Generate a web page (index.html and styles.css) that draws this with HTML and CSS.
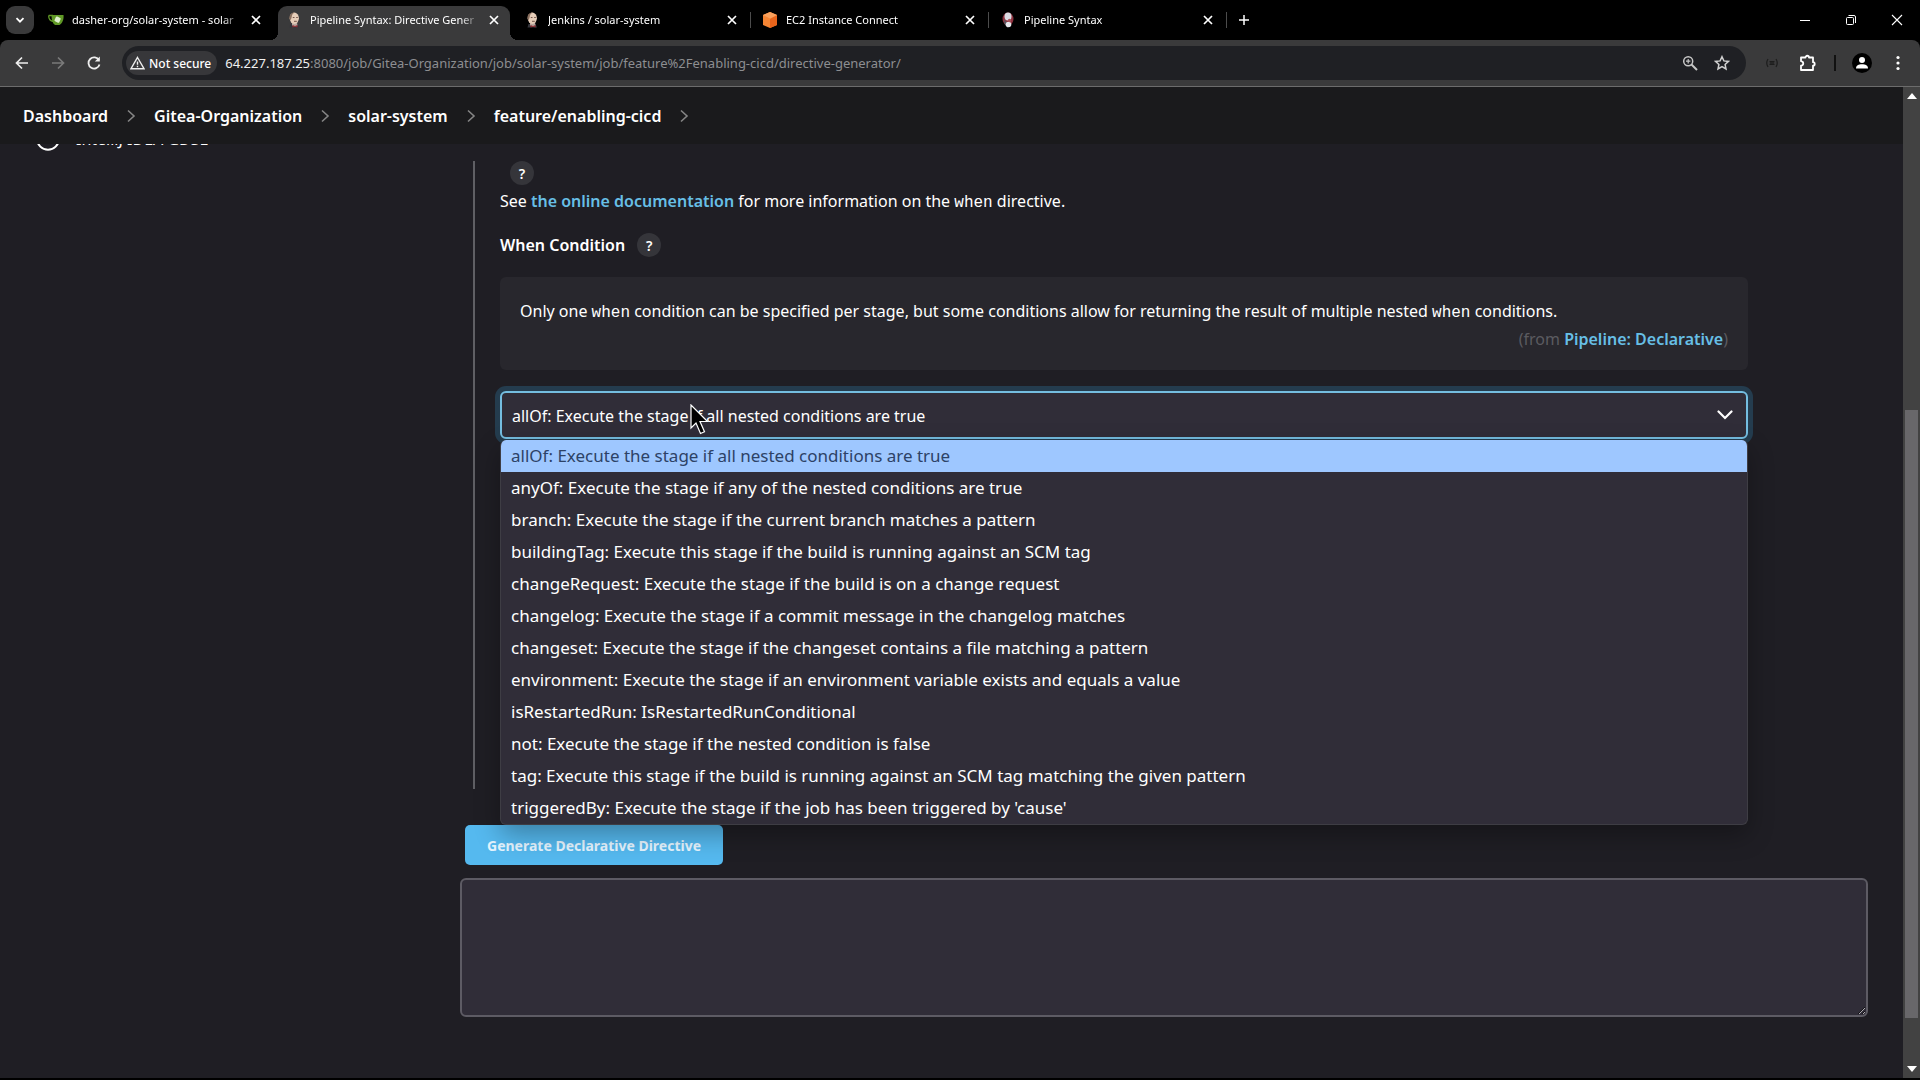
FILE: index.html
```html
<!DOCTYPE html>
<html lang="en">
<head>
<meta charset="utf-8">
<title>Pipeline Syntax: Directive Generator</title>
<link rel="stylesheet" href="styles.css">
</head>
<body>
<svg class="sprite" aria-hidden="true">
  <symbol id="close" viewBox="0 0 12 12"><path d="M2 2l8 8M10 2l-8 8" stroke="currentColor" stroke-width="1.7" fill="none"/></symbol>
  <symbol id="butler" viewBox="0 0 16 16"><path d="M3.500 15.500l1-3.500h7l1.500 3.500z" fill="#35353b"/><path d="M6 10.500h5l.5 3-2.500 1.500-3-1.500z" fill="#b9a8a0"/><path d="M6.500 13l2.500 1 2.500-1v2.500l-2.500-.8-2.500.8z" fill="#8e2f35"/><ellipse cx="8.300" cy="6.300" rx="4.600" ry="5.700" fill="#e6cdb8"/><path d="M3.600 7C2.800 2.500 6 .3 9 .6 6.500 1.500 6 3 5.700 5L4.800 8z" fill="#8a6f5e"/><path d="M6.800 5.500h1.700M10.200 5.500h1.600M8 9.300h2.800" stroke="#66473d" stroke-width=".9"/></symbol>
  <symbol id="crumb" viewBox="0 0 12 14"><path d="M3 1.500L9 7l-6 5.500" stroke="currentColor" stroke-width="1.600" fill="none"/></symbol>
</svg>

<header class="browser">
  <div class="tab-strip">
    <button class="tab-search" type="button" aria-label="Search tabs"><svg width="12" height="12" viewBox="0 0 12 12"><path d="M2.500 4.200L6 7.700l3.500-3.500" stroke="#fff" stroke-width="1.800" fill="none"/></svg></button>
    <nav class="tabs" aria-label="Tabs">
      <div class="tab">
        <svg class="favicon" viewBox="0 0 16 16"><path d="M.7 3.500C.5 8 2.500 9 5.500 9.500M.7 3.500H5" fill="none" stroke="#609926" stroke-width="1.300"/><path d="M3.500 3h12c.5 5-1.500 8.500-4 10H7C4.500 11.500 3.500 8 3.500 3z" fill="#609926"/><rect x="7" y="5" width="5.200" height="5.200" rx="1" transform="rotate(25 9.600 7.600)" fill="#dff0cf"/></svg>
        <a href="#" class="tab-title">dasher-org/solar-system - solar</a>
        <button type="button" class="tab-close" aria-label="Close tab"><svg><use href="#close"/></svg></button>
      </div>
      <div class="tab active">
        <svg class="favicon"><use href="#butler"/></svg>
        <a href="#" class="tab-title">Pipeline Syntax: Directive Gener</a>
        <button type="button" class="tab-close" aria-label="Close tab"><svg><use href="#close"/></svg></button>
      </div>
      <div class="tab divided">
        <svg class="favicon"><use href="#butler"/></svg>
        <a href="#" class="tab-title">Jenkins / solar-system</a>
        <button type="button" class="tab-close" aria-label="Close tab"><svg><use href="#close"/></svg></button>
      </div>
      <div class="tab divided">
        <svg class="favicon" viewBox="0 0 16 16"><path d="M8 0l7 3v10l-7 3-7-3V3z" fill="#f58534"/><path d="M8 7l7-4v10l-7 3z" fill="#e8641b"/><path d="M8 0l7 3-7 3.500L1 3z" fill="#f9a05c"/></svg>
        <a href="#" class="tab-title">EC2 Instance Connect</a>
        <button type="button" class="tab-close" aria-label="Close tab"><svg><use href="#close"/></svg></button>
      </div>
      <div class="tab divided">
        <svg class="favicon" viewBox="0 0 16 16"><ellipse cx="8" cy="7" rx="5.500" ry="6.500" fill="#8f3340"/><ellipse cx="8" cy="4.500" rx="3.500" ry="4" fill="#dadbe2"/><path d="M4 6c1 3 2 4 4 4.500V16L4.500 12z" fill="#56565f"/><circle cx="8.500" cy="12.500" r="2.800" fill="#e7e7ec"/><circle cx="9.500" cy="8.500" r="1.700" fill="#a9535c"/></svg>
        <a href="#" class="tab-title">Pipeline Syntax</a>
        <button type="button" class="tab-close" aria-label="Close tab"><svg><use href="#close"/></svg></button>
      </div>
    </nav>
    <button class="new-tab" type="button" aria-label="New tab"><svg width="12" height="12" viewBox="0 0 12 12"><path d="M6 1v10M1 6h10" stroke="#fff" stroke-width="1.500"/></svg></button>
    <div class="window-buttons">
      <button type="button" aria-label="Minimize"><svg width="12" height="12" viewBox="0 0 12 12"><path d="M1 6.500h10" stroke="#fff"/></svg></button>
      <button type="button" aria-label="Restore"><svg width="12" height="12" viewBox="0 0 12 12"><rect x="1.500" y="3.500" width="7" height="7" rx="1" fill="none" stroke="#fff"/><path d="M3.500 1.500h5.500q1.500 0 1.500 1.500v6" fill="none" stroke="#fff"/></svg></button>
      <button type="button" aria-label="Close"><svg width="12" height="12" viewBox="0 0 12 12"><path d="M1 1l10 10M11 1L1 11" stroke="#fff" stroke-width="1.100"/></svg></button>
    </div>
  </div>

  <div class="toolbar">
    <div class="nav-buttons">
      <button type="button" aria-label="Back"><svg width="16" height="16" viewBox="0 0 16 16"><path d="M14 8H3M8 2.500L2.500 8 8 13.500" fill="none" stroke="#eee" stroke-width="1.700"/></svg></button>
      <button type="button" aria-label="Forward"><svg width="16" height="16" viewBox="0 0 16 16"><path d="M2 8h11M8 2.500L13.500 8 8 13.500" fill="none" stroke="#7a7a7a" stroke-width="1.700"/></svg></button>
      <button type="button" aria-label="Reload"><svg width="16" height="16" viewBox="0 0 16 16"><path d="M13 5.300A5.600 5.600 0 1 0 13.500 9.500" fill="none" stroke="#eee" stroke-width="1.800"/><path d="M13.800 1.500v5h-5z" fill="#eee"/></svg></button>
    </div>
    <div class="omnibox">
      <button type="button" class="security"><svg width="15" height="14" viewBox="0 0 15 14"><path d="M7.500 1.500L14 12.700H1z" fill="none" stroke="#eee" stroke-width="1.400"/><path d="M7.500 5.500v3.200M7.500 9.800v1.500" stroke="#eee" stroke-width="1.400"/></svg>Not secure</button>
      <div class="url"><span class="host">64.227.187.25</span>:8080/job/Gitea-Organization/job/solar-system/job/feature%2Fenabling-cicd/directive-generator/</div>
      <button type="button" aria-label="Zoom"><svg width="16" height="16" viewBox="0 0 16 16"><circle cx="6.200" cy="6.200" r="4.500" fill="none" stroke="#c7c7c7" stroke-width="1.500"/><path d="M9.500 9.500L15 15" stroke="#c7c7c7" stroke-width="1.900"/><path d="M6.200 4v4.400M4 6.200h4.400" stroke="#c7c7c7" stroke-width="1.200"/></svg></button>
      <button type="button" aria-label="Bookmark"><svg width="16" height="16" viewBox="0 0 16 16"><path d="M8 1.700l1.900 4.200 4.600.5-3.400 3.100.9 4.500-4-2.300L4 14l.9-4.500L1.500 6.400l4.600-.5z" fill="none" stroke="#d0d0d0" stroke-width="1.500"/></svg></button>
    </div>
    <div class="extensions">
      <button type="button" aria-label="Media extension"><svg width="14" height="12" viewBox="0 0 14 12"><path d="M3 2Q.5 6 3 10M11 2q2.500 4 0 8M4.500 4.700h5M4.500 7.300h5M6 4v4M8 4v4" fill="none" stroke="#1d1d1d" stroke-width="1.200"/></svg></button>
      <button type="button" aria-label="Extensions"><svg width="18" height="18" viewBox="0 0 18 18"><path d="M2 3.500h4.500a1.700 1.700 0 0 1 3.500 0h4v4.700a1.700 1.700 0 0 1 0 3.400V16H2v-4.300c3-.5 3-4 0-4.500z" fill="none" stroke="#fff" stroke-width="1.800" stroke-linejoin="round"/></svg></button>
      <span class="bar"></span>
      <button type="button" aria-label="Profile"><svg width="20" height="20" viewBox="0 0 20 20"><circle cx="10" cy="10" r="10" fill="#000"/><circle cx="10" cy="7" r="3" fill="#fff"/><path d="M4 15.500c0-3 2.500-4.300 6-4.300s6 1.300 6 4.300z" fill="#fff"/></svg></button>
      <button type="button" aria-label="Menu"><svg width="4" height="16" viewBox="0 0 4 16"><g fill="#fff"><circle cx="2" cy="2.500" r="1.600"/><circle cx="2" cy="8" r="1.600"/><circle cx="2" cy="13.500" r="1.600"/></g></svg></button>
    </div>
  </div>
</header>

<div class="viewport">
  <div class="page">
    <nav class="breadcrumbs" aria-label="Breadcrumbs">
      <a href="#">Dashboard</a><svg class="crumb"><use href="#crumb"/></svg>
      <a href="#">Gitea-Organization</a><svg class="crumb"><use href="#crumb"/></svg>
      <a href="#">solar-system</a><svg class="crumb"><use href="#crumb"/></svg>
      <a href="#">feature/enabling-cicd</a><svg class="crumb"><use href="#crumb"/></svg>
    </nav>
    <div class="columns">
      <aside class="side">
        <a href="#" class="task"><svg width="24" height="24" viewBox="0 0 24 24"><circle cx="12" cy="12" r="10.800" fill="none" stroke="#fff" stroke-width="2"/><path d="M12 6v9M8 11.500l4 4 4-4" fill="none" stroke="#fff" stroke-width="2"/></svg>IntelliJ IDEA GDSL</a>
      </aside>
      <main class="main">
        <form>
          <section class="directive">
            <button type="button" class="help help-top">?</button>
            <p class="intro">See <a href="#">the online documentation</a> for more information on the <code>when</code> directive.</p>
            <div class="label-row"><label for="condition">When Condition</label><button type="button" class="help">?</button></div>
            <div class="help-box">
              <p>Only one <code>when</code> condition can be specified per stage, but some conditions allow for returning the result of multiple nested <code>when</code> conditions.</p>
              <p class="from">(from <a href="#">Pipeline: Declarative</a>)</p>
            </div>
            <div class="picker">
              <select id="condition"><option>allOf: Execute the stage if all nested conditions are true</option></select>
              <svg class="arrow" width="16" height="10" viewBox="0 0 16 10"><path d="M1.500 1.500L8 8l6.500-6.500" fill="none" stroke="#fff" stroke-width="2.200" stroke-linecap="round"/></svg>
              <ul class="menu" role="listbox" aria-label="When Condition">
                <li role="option" aria-selected="true" class="current">allOf: Execute the stage if all nested conditions are true</li>
                <li role="option">anyOf: Execute the stage if any of the nested conditions are true</li>
                <li role="option">branch: Execute the stage if the current branch matches a pattern</li>
                <li role="option">buildingTag: Execute this stage if the build is running against an SCM tag</li>
                <li role="option">changeRequest: Execute the stage if the build is on a change request</li>
                <li role="option">changelog: Execute the stage if a commit message in the changelog matches</li>
                <li role="option">changeset: Execute the stage if the changeset contains a file matching a pattern</li>
                <li role="option">environment: Execute the stage if an environment variable exists and equals a value</li>
                <li role="option">isRestartedRun: IsRestartedRunConditional</li>
                <li role="option">not: Execute the stage if the nested condition is false</li>
                <li role="option">tag: Execute this stage if the build is running against an SCM tag matching the given pattern</li>
                <li role="option">triggeredBy: Execute the stage if the job has been triggered by 'cause'</li>
              </ul>
              <svg class="pointer" width="20" height="32" viewBox="0 0 20 32"><path d="M1 1v23l5-5 4.500 10.500 4-1.700L10 17.500h7.500z" fill="#000" stroke="#fff" stroke-width="1.200"/></svg>
            </div>
          </section>
          <button type="button" class="generate">Generate Declarative Directive</button>
          <textarea class="output" aria-label="Generated directive"></textarea>
        </form>
      </main>
    </div>
  </div>
  <div class="scrollbar" aria-hidden="true">
    <svg width="10" height="6" viewBox="0 0 10 6"><path d="M5 0l5 6H0z" fill="#fff"/></svg>
    <div class="track"><div class="thumb"></div></div>
    <svg width="10" height="6" viewBox="0 0 10 6"><path d="M5 6l5-6H0z" fill="#fff"/></svg>
  </div>
</div>
</body>
</html>
```
FILE: styles.css
```css
* { box-sizing: border-box; }

body {
  margin: 0;
  min-height: 100vh;
  display: flex;
  flex-direction: column;
  padding-bottom: 2px;
  background: #000;
  color: #fff;
  font: 16px/28px "Noto Sans", "Open Sans", sans-serif;
}

button {
  border: 0;
  padding: 0;
  background: none;
  color: inherit;
  font-family: inherit;
  display: flex;
  align-items: center;
  justify-content: center;
  flex: none;
}

svg { flex: none; display: block; }
a { color: inherit; text-decoration: none; }
p { margin: 0; }
.sprite { position: absolute; width: 0; height: 0; }

/* Tab strip */
.tab-strip {
  display: flex;
  align-items: center;
  height: 40px;
  padding-left: 6px;
}

.tab-search {
  width: 28px;
  height: 28px;
  border-radius: 9px;
  background: #3a3a3b;
}

.tabs {
  display: flex;
  flex: 0 1 1184px;
  align-self: flex-end;
  gap: 6px;
  margin-left: 6px;
  min-width: 0;
}

.tab {
  position: relative;
  display: flex;
  align-items: center;
  gap: 8px;
  flex: 1 1 0;
  min-width: 0;
  height: 34px;
  padding: 0 10px 6px 8px;
}

.tab.active {
  background: #3a3a3b;
  border-radius: 9px 9px 0 0;
}

.tab.active::before,
.tab.active::after {
  content: "";
  position: absolute;
  bottom: 0;
  width: 8px;
  height: 8px;
}

.tab.active::before { right: 100%; background: radial-gradient(circle at 0 0, #000 8px, #3a3a3b 8px); }
.tab.active::after { left: 100%; background: radial-gradient(circle at 100% 0, #000 8px, #3a3a3b 8px); }

.tab.divided::after {
  content: "";
  position: absolute;
  right: -3px;
  top: 6px;
  width: 1px;
  height: 16px;
  background: #4c4c4c;
}

.favicon { width: 16px; height: 16px; }

.tab-title {
  flex: 1;
  min-width: 0;
  overflow: hidden;
  white-space: nowrap;
  font-size: 11px;
  line-height: 20px;
  mask-image: linear-gradient(to right, #000 calc(100% - 20px), transparent);
}

.tab-close, .tab-close svg { width: 12px; height: 12px; }
.new-tab { width: 24px; height: 24px; margin-left: 8px; }
.window-buttons { display: flex; margin-left: auto; }
.window-buttons button { width: 46px; height: 40px; }

/* Toolbar */
.toolbar {
  display: flex;
  align-items: center;
  height: 47px;
  padding: 0 12px 0 4px;
  background: #3a3a3b;
  border-bottom: 1px solid #6c6c6c;
  border-radius: 8px 8px 0 0;
}

.nav-buttons { display: flex; margin-right: 10px; }
.nav-buttons button { width: 36px; height: 32px; }

.omnibox {
  display: flex;
  align-items: center;
  flex: 1;
  min-width: 0;
  height: 34px;
  padding: 0 8px 0 4px;
  border-radius: 17px;
  background: #1f2024;
  font-size: 13px;
  line-height: 20px;
}

.omnibox > button { width: 32px; height: 24px; }

.omnibox > .security {
  width: auto;
  gap: 4px;
  padding: 0 6px 0 4px;
  border-radius: 12px;
  background: #37373a;
  font-size: 12px;
  font-weight: 500;
}

.url {
  flex: 1;
  min-width: 0;
  padding-left: 8px;
  overflow: hidden;
  white-space: nowrap;
  color: #8d8e91;
}

.host { color: #f1f1f1; }
.extensions { display: flex; align-items: center; margin-left: 8px; }
.extensions button { width: 36px; height: 32px; }
.extensions .bar { width: 2px; height: 16px; margin: 0 8px; background: #111; }
.extensions button:last-child { margin-right: -8px; }

/* Page */
.viewport { display: flex; flex: 1; }

.page {
  flex: 1;
  min-width: 0;
  background: #1f1e24;
}

.breadcrumbs {
  position: relative;
  z-index: 1;
  display: flex;
  align-items: center;
  gap: 17px;
  height: 57px;
  padding-left: 23px;
  background: #1a1a1c;
  font-size: 16px;
  font-weight: 600;
}

.crumb { width: 12px; height: 14px; color: #858585; }
.columns { display: grid; grid-template-columns: 460px minmax(0, 1fr); }

/* The last task is half scrolled under the breadcrumb bar */
.task {
  display: flex;
  align-items: center;
  gap: 16px;
  height: 24px;
  margin: -17px 0 0 36px;
  line-height: 32px;
}

.main { padding: 17px 35px 40px 0; }

.directive {
  min-height: 628px;
  margin: 0 120px 36px 13px;
  padding-left: 25px;
  border-left: 2px solid #5f5f64;
}

code { font: 16px "Liberation Mono", monospace; }

.help {
  width: 24px;
  height: 24px;
  border-radius: 50%;
  background: #35353a;
  font-size: 14px;
  font-weight: 600;
}

.help-top { margin-left: 10px; }
.intro a, .from a { color: #67bfe6; font-weight: 600; }
.intro { padding-top: 2px; }

.label-row {
  display: flex;
  align-items: center;
  gap: 12px;
  margin: 16px 0 18px;
  font-weight: 600;
}

.help-box {
  margin-bottom: 21px;
  padding: 20px 20px 17px;
  border-radius: 6px;
  background: #28272d;
}

.from { text-align: right; color: #5b5b60; }
.picker { position: relative; }

.picker select {
  display: block;
  width: 100%;
  height: 48px;
  padding: 2px 10px 0;
  appearance: none;
  border: 2px solid #74bde0;
  border-radius: 6px;
  outline: 0;
  background: #302d38;
  box-shadow: 0 0 0 5px #243c4e;
  color: #fff;
  font: inherit;
}

.arrow { position: absolute; right: 15px; top: 19px; }

.menu {
  position: absolute;
  left: 0;
  right: 0;
  top: 49px;
  margin: 0;
  padding: 0;
  overflow: hidden;
  list-style: none;
  border: 1px solid #3e3d44;
  border-top: 0;
  border-radius: 6px;
  background: #302d38;
  box-shadow: 0 10px 26px rgba(0, 0, 0, .3);
  font-size: 17px;
  line-height: 32px;
}

.menu li { padding: 0 10px; }
.menu .current { background: #9ec7ff; color: #2d4266; }
.pointer { position: absolute; left: 190px; top: 13px; }

.generate {
  height: 40px;
  margin: 0 0 13px 5px;
  padding: 0 22px;
  border-radius: 5px;
  background: #55b9ef;
  color: #e6f5ff;
  font-size: 14px;
  font-weight: 700;
}

.output {
  display: block;
  width: 100%;
  height: 139px;
  border: 2px solid #5d5b64;
  border-radius: 6px;
  background: #302d38;
  color: #fff;
  resize: vertical;
}

/* Scrollbar */
.scrollbar {
  display: flex;
  flex-direction: column;
  align-items: center;
  width: 17px;
  padding: 6px 0;
  background: #424242;
}

.track { display: flex; flex-direction: column; flex: 1; }
.track::before { content: ""; flex: 311; }
.track::after { content: ""; flex: 48; }
.thumb { flex: 608; width: 13px; background: #68676a; }
```
